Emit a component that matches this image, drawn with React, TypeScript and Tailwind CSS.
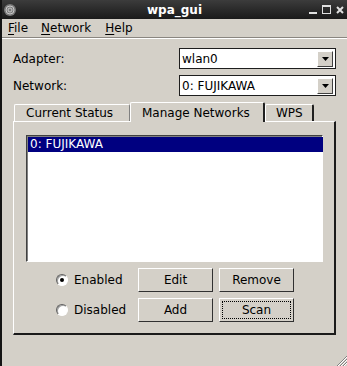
import React from "react";

const font = { fontFamily: '"DejaVu Sans", Verdana, sans-serif' };

function Combo({ value }: { value: string }) {
  return (
    <div className="w-[157px] h-[21px] bg-white border border-[#1e1e1e] flex items-center">
      <div className="flex-1 pl-[2px] text-[12px] leading-none text-black">{value}</div>
      <div className="w-[16px] h-[16px] mr-[2px] bg-[#d4d0c8] border-t border-l border-white border-r border-b border-r-[#404040] border-b-[#404040] flex items-center justify-center">
        <svg width="7" height="4" viewBox="0 0 7 4">
          <path d="M0 0 H7 L3.5 4 Z" fill="#000" />
        </svg>
      </div>
    </div>
  );
}

function Button({ label, focus }: { label: string; focus?: boolean }) {
  return (
    <div className="w-[75px] h-[24px] bg-[#d4d0c8] border-t border-l border-t-white border-l-white border-r border-b border-r-[#303030] border-b-[#303030] flex items-center justify-center p-[2px]">
      <div
        className={
          "w-full h-full flex items-center justify-center text-[12px] text-black " +
          (focus ? "border border-dotted border-black" : "")
        }
      >
        {label}
      </div>
    </div>
  );
}

function Radio({ checked, label }: { checked?: boolean; label: string }) {
  return (
    <div className="flex items-center gap-[6px] h-[24px]">
      <div className="w-[12px] h-[12px] rounded-full bg-white border border-t-[#606060] border-l-[#606060] border-r-white border-b-white flex items-center justify-center shadow-[inset_1px_1px_0_#a0a0a0]">
        {checked && <div className="w-[4px] h-[4px] rounded-full bg-black" />}
      </div>
      <span className="text-[12px] text-black">{label}</span>
    </div>
  );
}

export default function App() {
  return (
    <div
      className="w-[347px] h-[366px] bg-[#d4d0c8] border-l-2 border-[#141414] flex flex-col relative overflow-hidden"
      style={font}
    >
      {/* Title bar */}
      <div className="h-[19px] bg-gradient-to-b from-[#3c3c3c] to-[#1a1a1a] relative flex items-center">
        <div className="ml-[2px] w-[12px] h-[12px] rounded-full bg-[#7a7a7a] flex items-center justify-center">
          <svg width="10" height="10" viewBox="0 0 10 10">
            <circle cx="5" cy="5" r="4" fill="none" stroke="#c8c8c8" strokeWidth="1" />
            <circle cx="5" cy="5" r="2" fill="none" stroke="#c8c8c8" strokeWidth="1" />
          </svg>
        </div>
        <div className="absolute inset-0 flex items-center justify-center text-white font-bold text-[12px]">
          wpa_gui
        </div>
        <div className="ml-auto mr-[3px] flex items-center gap-[5px]">
          <svg width="8" height="8" viewBox="0 0 8 8">
            <rect x="0" y="6" width="8" height="2" fill="#e0e0e0" />
          </svg>
          <svg width="9" height="9" viewBox="0 0 9 9">
            <rect x="0.5" y="0.5" width="8" height="8" fill="none" stroke="#e0e0e0" />
            <rect x="0" y="0" width="9" height="2" fill="#e0e0e0" />
          </svg>
          <svg width="8" height="8" viewBox="0 0 8 8">
            <path d="M1 1 L7 7 M7 1 L1 7" stroke="#e0e0e0" strokeWidth="2" />
          </svg>
        </div>
      </div>

      {/* Menu bar */}
      <div className="h-[19px] flex items-center text-[12px] text-black border-b border-[#8a8680] shadow-[0_1px_0_#ffffff]">
        <span className="ml-[6px]">
          <span className="underline underline-offset-2">F</span>ile
        </span>
        <span className="ml-[13px]">
          <span className="underline underline-offset-2">N</span>etwork
        </span>
        <span className="ml-[14px]">
          <span className="underline underline-offset-2">H</span>elp
        </span>
      </div>

      {/* Form */}
      <div className="mt-[10px] flex flex-col gap-[6px] pl-[11px] pr-[11px]">
        <div className="flex items-center justify-between">
          <span className="text-[12px] text-black">Adapter:</span>
          <Combo value="wlan0" />
        </div>
        <div className="flex items-center justify-between">
          <span className="text-[12px] text-black">Network:</span>
          <Combo value="0: FUJIKAWA" />
        </div>
      </div>

      {/* Tabs */}
      <div className="mt-[5px] ml-[11px] w-[323px] flex flex-col">
        <div className="flex items-end h-[20px] pl-[1px]">
          <div className="h-[17px] w-[116px] border-t border-l border-white border-r border-r-[#808080] rounded-t-[2px] flex items-center pl-[11px] text-[12px] text-black">
            Current Status
          </div>
          <div className="h-[20px] w-[135px] border-t border-l border-white border-r-2 border-r-[#202020] rounded-t-[2px] flex items-start pt-[1px] pl-[11px] text-[12px] text-black relative z-10 bg-[#d4d0c8] -mb-[1px]">
            Manage Networks
          </div>
          <div className="h-[17px] w-[49px] border-t border-l border-white border-r-2 border-r-[#202020] rounded-t-[2px] flex items-center pl-[10px] text-[12px] text-black">
            WPS
          </div>
        </div>
        <div className="h-[214px] border-t border-l border-white border-r-2 border-b-2 border-r-[#1a1a1a] border-b-[#1a1a1a] flex flex-col pt-[13px] pl-[12px] pr-[11px]">
          <div className="h-[127px] bg-white border-t border-l border-t-[#404040] border-l-[#404040] border-r border-b border-r-white border-b-white shadow-[inset_1px_1px_0_#808080] pt-[1px] pl-[1px]">
            <div className="h-[15px] w-[295px] bg-[#000080] text-white text-[12px] leading-[15px] pl-[2px]">
              0: FUJIKAWA
            </div>
          </div>
          <div className="mt-[6px] flex gap-[6px]">
            <div className="w-[106px] flex flex-col gap-[6px] pl-[30px]">
              <Radio checked label="Enabled" />
              <Radio label="Disabled" />
            </div>
            <div className="flex flex-col gap-[6px]">
              <div className="flex gap-[6px]">
                <Button label="Edit" />
                <Button label="Remove" />
              </div>
              <div className="flex gap-[6px]">
                <Button label="Add" />
                <Button label="Scan" focus />
              </div>
            </div>
          </div>
        </div>
      </div>

      {/* Resize grip */}
      <svg className="absolute right-0 bottom-0" width="11" height="11" viewBox="0 0 11 11">
        <path d="M11 1 L1 11 M11 4 L4 11 M11 7 L7 11" stroke="#808080" strokeWidth="1" />
        <path d="M11 2 L2 11 M11 5 L5 11 M11 8 L8 11" stroke="#ffffff" strokeWidth="1" />
      </svg>
    </div>
  );
}
